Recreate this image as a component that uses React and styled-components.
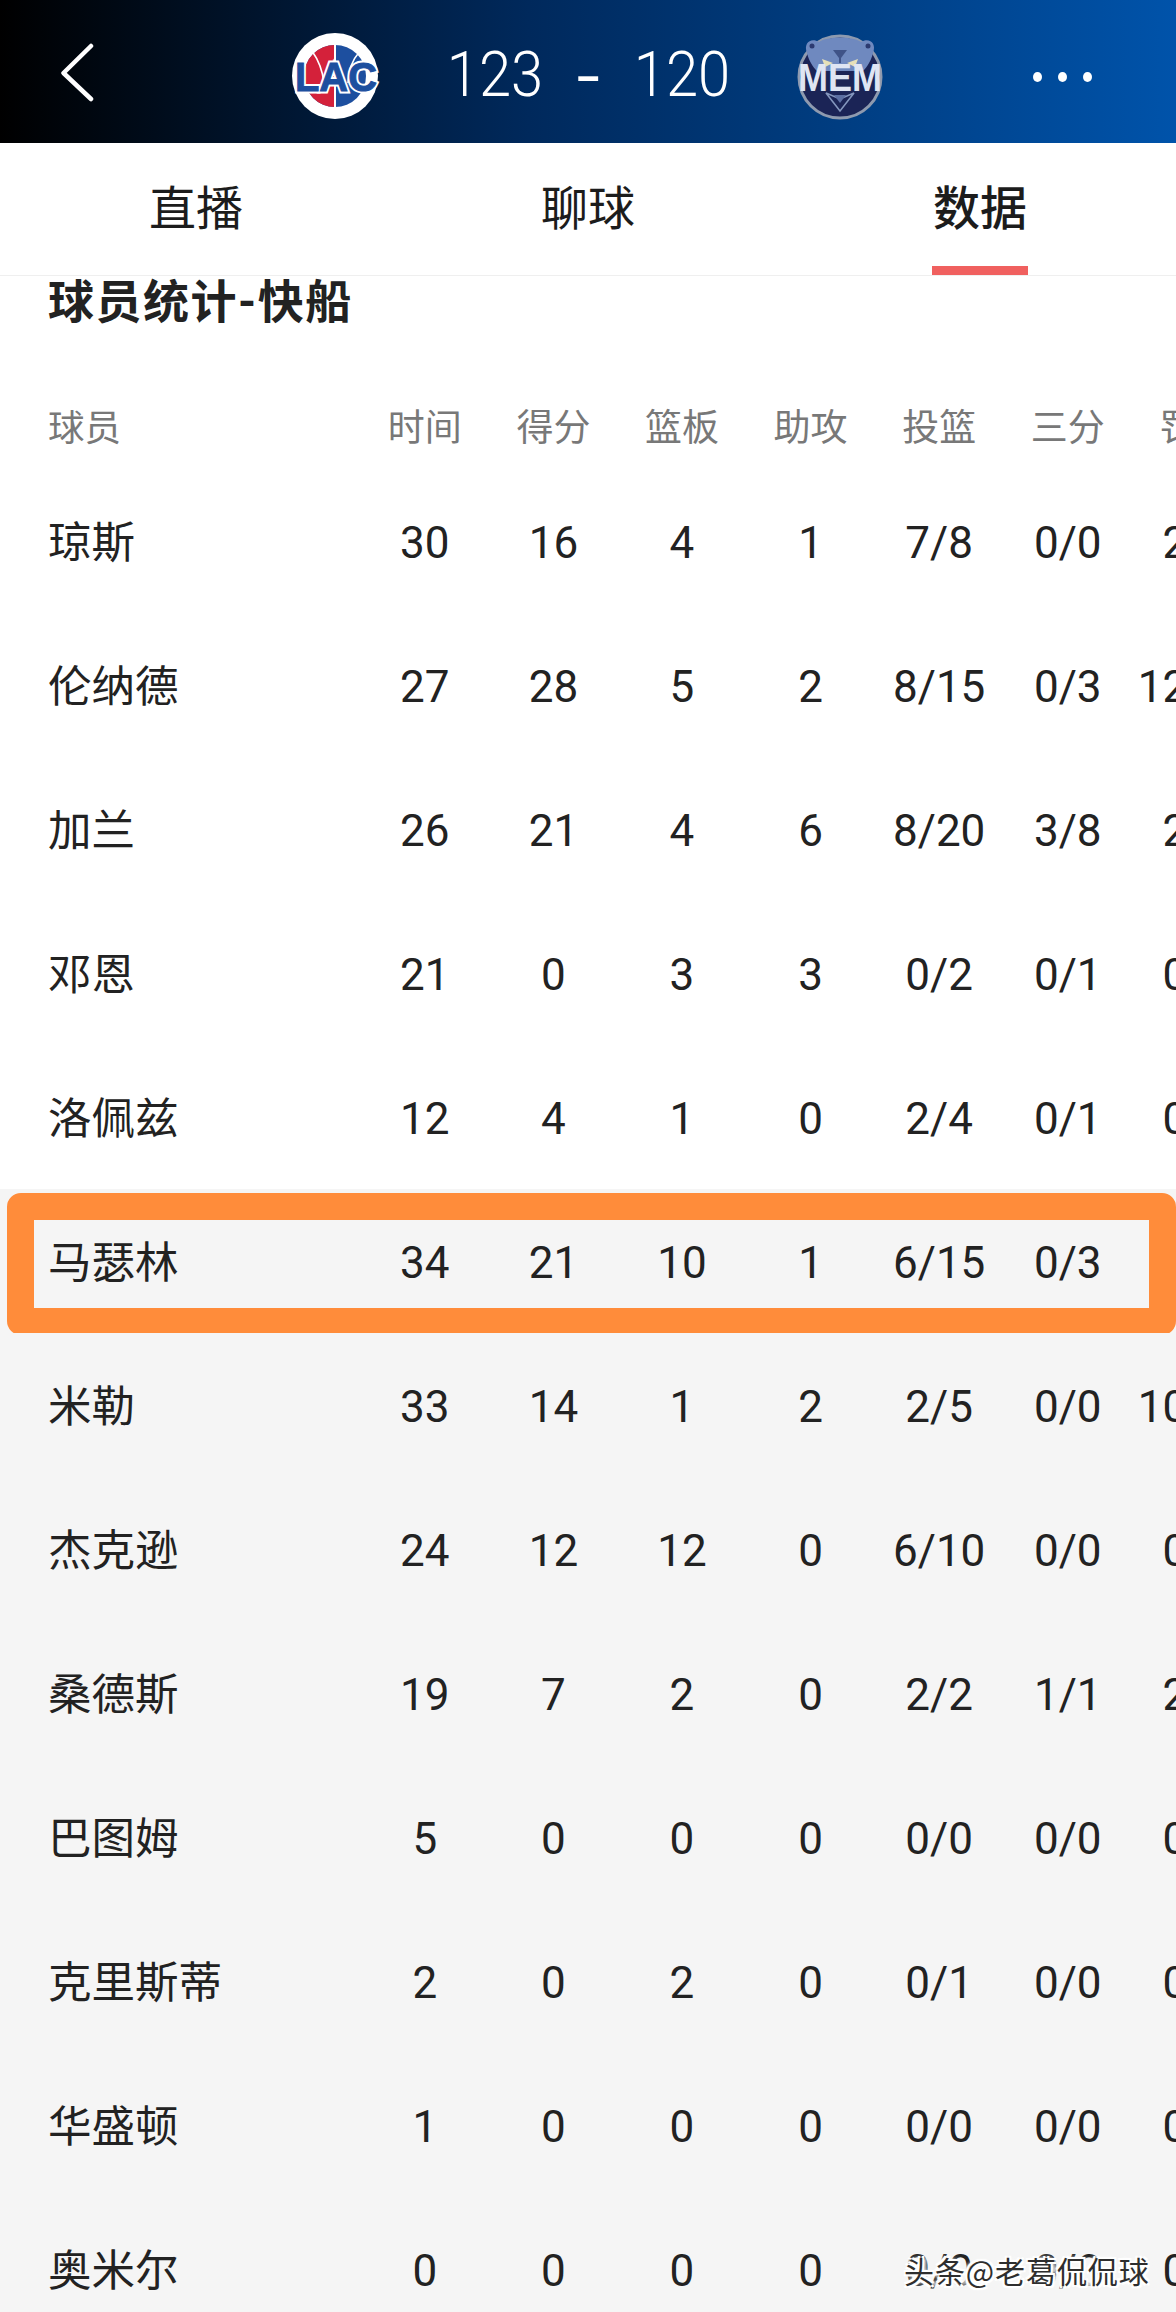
import React from "react";
import styled, { createGlobalStyle } from "styled-components";

const Global = createGlobalStyle`
  html, body { margin: 0; padding: 0; background: #fff; }
  body { font-family: Roboto, "Noto Sans CJK SC", sans-serif; }
`;

const Page = styled.div`
  position: relative;
  width: 1176px;
  height: 2312px;
  overflow: hidden;
  background: #fff;
  color: #222;
`;

const Header = styled.header`
  display: grid;
  grid-template-columns: 290px 90px 415px 90px 1fr;
  align-items: center;
  height: 143px;
  background: linear-gradient(90deg, #000 0%, #00295c 45%, #0053aa 100%);
  color: #fff;
`;

const BackSlot = styled.div`
  display: flex;
  padding-left: 60px;
`;

const LogoSvg = styled.svg`
  display: block;
  width: 90px;
  height: 90px;
  margin-top: 8px;
`;

const Score = styled.div`
  display: flex;
  align-items: center;
  justify-content: center;
  gap: 36px;
  font-size: 63px;
  font-weight: 300;
  line-height: 70px;
  transform: scaleX(0.92);
  margin-top: 6px;
  margin-left: 2px;
`;

const ScoreDash = styled.span`
  font-size: 92px;
  font-weight: 300;
  line-height: 70px;
  margin-top: 4px;
`;

const Dots = styled.div`
  display: flex;
  justify-content: flex-end;
  gap: 16px;
  padding-right: 84px;
  margin-top: 10px;
`;

const Dot = styled.span`
  width: 9px;
  height: 10px;
  border-radius: 50%;
  background: #fff;
`;

const Tabs = styled.nav`
  display: grid;
  grid-template-columns: repeat(3, 1fr);
  height: 132px;
  border-bottom: 1px solid #efefef;
  box-sizing: content-box;
`;

const Tab = styled.div`
  position: relative;
  display: flex;
  align-items: center;
  justify-content: center;
  font-size: 47px;
  font-weight: ${(p) => (p.$active ? 500 : 400)};
  color: #1c1c1c;
  padding-bottom: 9px;
  box-sizing: border-box;
`;

const TabMark = styled.span`
  position: absolute;
  left: 148px;
  bottom: 0;
  width: 96px;
  height: 9px;
  background: #f0605f;
`;

const Title = styled.h2`
  margin: 0 0 57px;
  padding-left: 48px;
  height: 52px;
  font-size: 46px;
  line-height: 52px;
  font-weight: 700;
  letter-spacing: 1.5px;
  color: #222;
`;

const Row = styled.div`
  position: relative;
  display: grid;
  grid-template-columns: 360.5px repeat(7, 128.6px);
  align-items: center;
  height: ${(p) => (p.$head ? 84 : 144)}px;
  padding-bottom: ${(p) => (p.$head ? 4 : 0)}px;
  box-sizing: border-box;
  background: ${(p) => (p.$shaded ? "#f5f5f5" : "#fff")};
  color: ${(p) => (p.$head ? "#787878" : "#222")};
  font-size: ${(p) => (p.$head ? 37 : 44)}px;
`;

const Name = styled.div`
  padding-left: 48px;
  margin-top: ${(p) => (p.$head ? 0 : -3)}px;
  font-size: ${(p) => (p.$head ? 36.5 : 43.5)}px;
  white-space: nowrap;
`;

const Cell = styled.div`
  margin-top: ${(p) => (p.$head ? 0 : 3)}px;
  text-align: center;
  white-space: nowrap;
`;

const Highlight = styled.div`
  position: absolute;
  top: 4px;
  left: 7px;
  right: 0;
  height: 142px;
  box-sizing: border-box;
  border: 27px solid #ff8c3a;
  border-radius: 14px;
`;

const Watermark = styled.div`
  position: absolute;
  left: 904px;
  top: 2252px;
  font-family: "Noto Sans CJK SC", sans-serif;
  font-size: 30px;
  line-height: 36px;
  color: #2e2e2e;
  white-space: nowrap;
  letter-spacing: 0.9px;
  text-shadow: 2px 2px 0 #fff, -2px -2px 0 #fff, 2px -2px 0 #fff, -2px 2px 0 #fff, 0 0 4px #fff, 0 0 6px #fff,
    4px 0 3px #f5f5f5, -4px 0 3px #f5f5f5;
`;

const players = [
  ["琼斯", "30", "16", "4", "1", "7/8", "0/0", "2/2"],
  ["伦纳德", "27", "28", "5", "2", "8/15", "0/3", "12/12"],
  ["加兰", "26", "21", "4", "6", "8/20", "3/8", "2/2"],
  ["邓恩", "21", "0", "3", "3", "0/2", "0/1", "0/0"],
  ["洛佩兹", "12", "4", "1", "0", "2/4", "0/1", "0/0"],
  ["马瑟林", "34", "21", "10", "1", "6/15", "0/3", "9/9"],
  ["米勒", "33", "14", "1", "2", "2/5", "0/0", "10/10"],
  ["杰克逊", "24", "12", "12", "0", "6/10", "0/0", "0/0"],
  ["桑德斯", "19", "7", "2", "0", "2/2", "1/1", "2/2"],
  ["巴图姆", "5", "0", "0", "0", "0/0", "0/0", "0/0"],
  ["克里斯蒂", "2", "0", "2", "0", "0/1", "0/0", "0/0"],
  ["华盛顿", "1", "0", "0", "0", "0/0", "0/0", "0/0"],
  ["奥米尔", "0", "0", "0", "0", "0/0", "0/0", "0/0"],
];

const columns = ["时间", "得分", "篮板", "助攻", "投篮", "三分", "罚球"];

const BackIcon = () => (
  <svg width="36" height="60" viewBox="0 0 36 60" fill="none" style={{ display: "block" }}>
    <path d="M31 4 L3.5 31 L31 57" stroke="#fff" strokeWidth="4.5" strokeLinecap="round" strokeLinejoin="round" />
  </svg>
);

const lacText = {
  x: 46,
  y: 60,
  textAnchor: "middle",
  fontFamily: "Liberation Sans, sans-serif",
  fontWeight: 700,
  fontSize: 41,
  textLength: 82,
  lengthAdjust: "spacingAndGlyphs",
};

const LacLogo = () => (
  <LogoSvg viewBox="0 0 90 90">
    <circle cx="45" cy="45" r="43" fill="#fff" />
    <circle cx="45" cy="45" r="31" fill="#1d4f9f" />
    <path d="M45 14 A31 31 0 0 0 45 76 Z" fill="#d4213a" />
    <path d="M45 14 V76" stroke="#fff" strokeWidth="2" />
    <path d="M22 20 Q32 34 34 52 M70 20 Q58 34 58 52" stroke="#fff" strokeWidth="1.6" fill="none" />
    <text {...lacText} fill="#fff" stroke="#fff" strokeWidth="5">
      LAC
    </text>
    <text {...lacText} fill="#1d4f9f" stroke="#1d4f9f" strokeWidth="1">
      LAC
    </text>
  </LogoSvg>
);

const MemLogo = () => (
  <LogoSvg viewBox="0 0 90 90">
    <circle cx="45" cy="46" r="41" fill="#1b2456" stroke="#8e9aaf" strokeWidth="3" />
    <path
      d="M12 22 C8 12 16 6 24 11 C32 5 58 5 66 11 C74 6 82 12 78 22 C76 30 72 36 68 40 H22 C18 36 14 30 12 22 Z"
      fill="#6f89bf"
    />
    <circle cx="17" cy="15" r="2.5" fill="#2c3a70" />
    <circle cx="73" cy="15" r="2.5" fill="#2c3a70" />
    <path d="M27 28 L38 32 L30 36 Z M63 28 L52 32 L60 36 Z" fill="#e6e0b8" />
    <path d="M38 19 H52 L46 27 V32 H44 V27 Z" fill="#3f5388" />
    <path d="M31 62 L45 80 L59 62 L45 68 Z" fill="none" stroke="#8496bd" strokeWidth="1.6" />
    <path d="M39 64 H51 L45 72 Z" fill="#5c6fa3" />
    <text
      x="45"
      y="60"
      textAnchor="middle"
      fontFamily="Liberation Sans, sans-serif"
      fontWeight="700"
      fontSize="38"
      fill="#dfe5f3"
      textLength="84"
      lengthAdjust="spacingAndGlyphs"
    >
      MEM
    </text>
  </LogoSvg>
);

export default function App() {
  return (
    <Page>
      <Global />
      <Header>
        <BackSlot>
          <BackIcon />
        </BackSlot>
        <LacLogo />
        <Score>
          <span>123</span>
          <ScoreDash>-</ScoreDash>
          <span>120</span>
        </Score>
        <MemLogo />
        <Dots>
          <Dot />
          <Dot />
          <Dot />
        </Dots>
      </Header>
      <Tabs>
        <Tab>直播</Tab>
        <Tab>聊球</Tab>
        <Tab $active>
          数据
          <TabMark />
        </Tab>
      </Tabs>
      <Title>球员统计-快船</Title>
      <Row $head>
        <Name $head>球员</Name>
        {columns.map((c) => (
          <Cell key={c} $head>
            {c}
          </Cell>
        ))}
      </Row>
      {players.map(([name, ...stats], i) => (
        <Row key={name} $shaded={i >= 5}>
          <Name>{name}</Name>
          {stats.map((s, j) => (
            <Cell key={j}>{s}</Cell>
          ))}
          {i === 5 && <Highlight />}
        </Row>
      ))}
      <Watermark>头条@老葛侃侃球</Watermark>
    </Page>
  );
}
